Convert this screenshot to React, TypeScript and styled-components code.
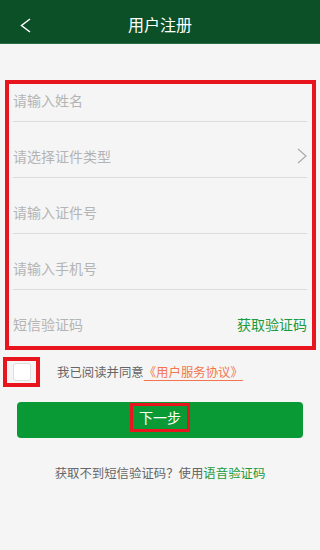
import styled, { createGlobalStyle } from "styled-components";

const GlobalStyle = createGlobalStyle`
  html, body {
    margin: 0;
    padding: 0;
    background: #f5f5f5;
    font-family: "Noto Sans CJK SC", "Noto Sans", sans-serif;
  }
`;

const Page = styled.div`
  width: 320px;
  min-height: 550px;
  background: #f5f5f5;
`;

const Header = styled.div`
  height: 44px;
  padding-top: 4px;
  background: #0c5028;
  border-bottom: 1px solid #2d6b42;
  box-sizing: border-box;
  display: flex;
  align-items: center;
  justify-content: center;
  position: relative;
  color: #fff;
  font-size: 16px;
`;

const Back = styled.div`
  position: absolute;
  left: 18px;
  top: 16px;
  width: 16px;
  height: 20px;
`;

const Form = styled.div`
  margin: 36px 4px 0 5px;
  border: 4px solid #e8141e;
`;

const Row = styled.div<{ $first?: boolean; $last?: boolean }>`
  height: ${(p) => (p.$first ? 38 : 56)}px;
  box-sizing: border-box;
  padding-top: ${(p) => (p.$first ? 0 : 12)}px;
  padding-bottom: ${(p) => (p.$first ? 5 : 0)}px;
  margin: 0 5px 0 4px;
  border-bottom: ${(p) => (p.$last ? "none" : "1px solid #dcdcdc")};
  display: flex;
  align-items: center;
  justify-content: space-between;
  font-size: 14px;
  color: #b4b4b4;
`;

const Chevron = styled.svg`
  width: 10px;
  height: 16px;
  margin-right: 0;
`;

const GreenLink = styled.span`
  color: #1c9a3c;
`;

const AgreeRow = styled.div`
  margin-top: 7px;
  display: flex;
  align-items: center;
`;

const CheckFrame = styled.div`
  margin-left: 3px;
  width: 37px;
  height: 30px;
  box-sizing: border-box;
  border: 4px solid #e8141e;
  display: flex;
  align-items: center;
  justify-content: center;
`;

const CheckBox = styled.div`
  width: 16px;
  height: 16px;
  background: #fff;
  border: 1px solid #dedede;
  border-radius: 3px;
`;

const AgreeText = styled.div`
  margin-left: 17px;
  font-size: 12.4px;
  color: #666;
`;

const Protocol = styled.span`
  color: #f3754f;
  text-decoration: underline;
  text-underline-offset: 3px;
`;

const Button = styled.div`
  margin: 15px 17px 0 17px;
  height: 36px;
  border-radius: 4px;
  background: #0a9a35;
  display: flex;
  align-items: center;
  justify-content: center;
`;

const ButtonLabel = styled.div`
  width: 60px;
  height: 29px;
  box-sizing: border-box;
  border: 3px solid #e8141e;
  margin-top: -6px;
  color: #fff;
  font-size: 14px;
  display: flex;
  align-items: center;
  justify-content: center;
`;

const Footer = styled.div`
  margin-top: 26px;
  text-align: center;
  font-size: 12.4px;
  color: #666;
`;

export default function App() {
  return (
    <Page>
      <GlobalStyle />
      <Header>
        <Back>
          <svg width="16" height="20" viewBox="0 0 16 20">
            <polyline
              points="12,3 3.5,9.5 12,16"
              fill="none"
              stroke="#fff"
              strokeWidth="1.5"
            />
          </svg>
        </Back>
        用户注册
      </Header>
      <Form>
        <Row $first>请输入姓名</Row>
        <Row>
          请选择证件类型
          <Chevron viewBox="0 0 10 16">
            <polyline
              points="1,1 9,8 1,15"
              fill="none"
              stroke="#aaa"
              strokeWidth="1.2"
            />
          </Chevron>
        </Row>
        <Row>请输入证件号</Row>
        <Row>请输入手机号</Row>
        <Row $last>
          短信验证码
          <GreenLink>获取验证码</GreenLink>
        </Row>
      </Form>
      <AgreeRow>
        <CheckFrame>
          <CheckBox />
        </CheckFrame>
        <AgreeText>
          我已阅读并同意<Protocol>《用户服务协议》</Protocol>
        </AgreeText>
      </AgreeRow>
      <Button>
        <ButtonLabel>下一步</ButtonLabel>
      </Button>
      <Footer>
        获取不到短信验证码？使用<GreenLink>语音验证码</GreenLink>
      </Footer>
    </Page>
  );
}
